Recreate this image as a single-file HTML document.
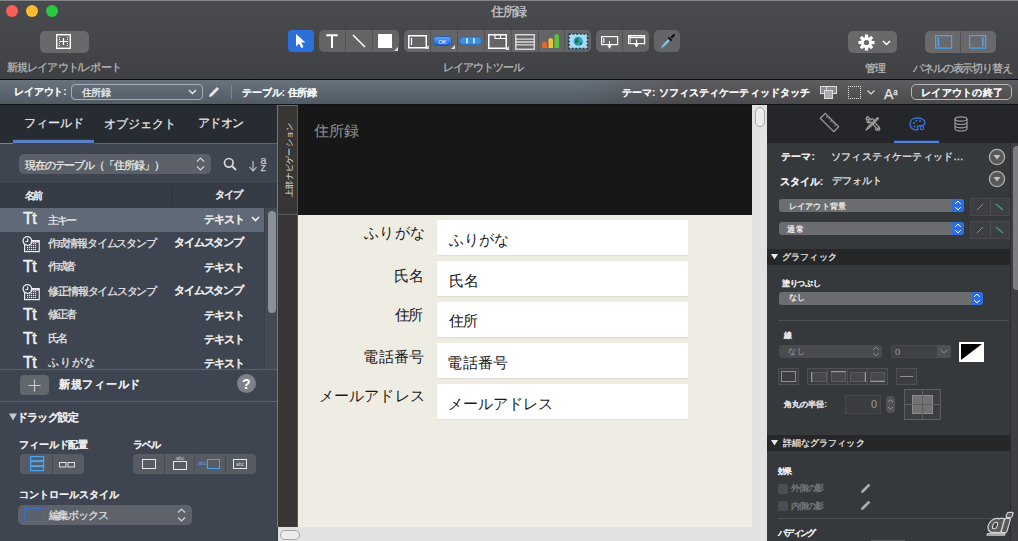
<!DOCTYPE html>
<html lang="ja">
<head>
<meta charset="utf-8">
<style>
*{margin:0;padding:0;box-sizing:border-box}
html,body{width:1018px;height:541px;overflow:hidden;background:#3a3a3c;font-family:"Liberation Sans",sans-serif;color:#fff;position:relative}
.a{position:absolute}
.t{position:absolute;white-space:nowrap;line-height:1;-webkit-text-stroke:0.25px currentColor}
svg{position:absolute;overflow:visible}
/* toolbar */
#top{left:0;top:0;width:1018px;height:79px;background:linear-gradient(#4a4b4e,#404144);border-top:1px solid #858587}
#tline{left:0;top:79px;width:1018px;height:1px;background:#0c0c0c}
#lbarg{left:0;top:80px;width:1018px;height:24px;background:linear-gradient(#5e5e60,#4a4a4c)}
#lbarb{left:0;top:80px;width:1018px;height:24px;background:linear-gradient(#68737e,#515b65);-webkit-mask-image:linear-gradient(90deg,#000 0,#000 570px,transparent 680px)}
#lline{left:0;top:104px;width:1018px;height:1px;background:#101214}
.light{border-radius:50%;width:12px;height:12px;top:5px}
.btn{background:#69696c;border-radius:5px}
.seg{background:#656568;border-radius:5px}
.div{width:1px;background:#545457;top:0;bottom:0}
.t[style*="color:#1a1a1a"]{-webkit-text-stroke:0}
.t[style*="font-weight:bold"],.lbt{-webkit-text-stroke:0.05px currentColor}
.lab{font-size:11px;color:#b9b9bb}
.lbt{font-size:11px;font-weight:bold;color:#f4f4f4}
/* main */
#left{left:0;top:105px;width:277px;height:436px;background:#3e4450}
#ruler{left:277px;top:105px;width:21px;height:422px;background:#383634;border-left:1px solid #7a7a7a;border-right:1px solid #5a5a5a;border-top:1px solid #6a6a6a}
#chead{left:298px;top:105px;width:454px;height:110px;background:#171717}
#cbody{left:298px;top:215px;width:454px;height:312px;background:#efede3}
#vscroll{left:752px;top:105px;width:15px;height:436px;background:#e2e2e2}
#hscroll{left:278px;top:527px;width:474px;height:14px;background:#e2e2e2}
#rtabs{left:767px;top:105px;width:251px;height:38px;background:#242629}
#right{left:767px;top:143px;width:251px;height:398px;background:#36393c}
</style>
</head>
<body>
<!-- ============ TOOLBAR ============ -->
<div id="top" class="a"></div>
<div class="a light" style="left:6px;background:#fc5f57"></div>
<div class="a light" style="left:26px;background:#fdbc2e"></div>
<div class="a light" style="left:46px;background:#2ac840"></div>
<div class="t" style="left:490.82px;top:5.71px;font-size:12.5px;color:#cacacc;letter-spacing:-1.31px">住所録</div>

<!-- new layout -->
<div class="a btn" style="left:40px;top:31px;width:49px;height:22px"></div>
<svg style="left:56px;top:34px" width="15" height="15" viewBox="0 0 15 15"><rect x="0.7" y="0.7" width="13.6" height="13.6" fill="none" stroke="#fff" stroke-width="1.4"/><g fill="#f0f0f0"><rect x="3" y="3" width="1" height="1"/><rect x="11" y="3" width="1" height="1"/><rect x="3" y="5" width="1" height="1"/><rect x="11" y="5" width="1" height="1"/><rect x="3" y="7" width="1" height="1"/><rect x="11" y="7" width="1" height="1"/><rect x="3" y="9" width="1" height="1"/><rect x="11" y="9" width="1" height="1"/><rect x="3" y="11" width="1" height="1"/><rect x="11" y="11" width="1" height="1"/></g><path d="M7.5 4v7M4 7.5h7" stroke="#fff" stroke-width="1.2"/></svg>
<div class="t lab" style="left:6.54px;top:61.92px;letter-spacing:-0.80px;font-size:10.7px">新規レイアウト/レポート</div>

<!-- layout tools -->
<div class="a" style="left:288px;top:30px;width:26px;height:22px;background:#2c6fda;border-radius:4px"></div>
<svg style="left:294px;top:33px" width="14" height="16" viewBox="0 0 14 16"><path d="M2 1L2 13.5L5 10.5L7.5 15L9.5 14L7.2 9.6L11.5 9.6Z" fill="#fff"/></svg>

<div class="a seg" style="left:319px;top:30px;width:80px;height:22px"></div>
<div class="a div" style="left:345px;top:30px;height:22px"></div>
<div class="a div" style="left:372px;top:30px;height:22px"></div>
<svg style="left:326px;top:34px" width="12" height="14"><path d="M0.3 0.3H11.7V2.3H7V14H5V2.3H0.3Z" fill="#fff"/></svg>
<svg style="left:352px;top:34px" width="14" height="14"><path d="M1 1L13 13" stroke="#fff" stroke-width="1.5"/></svg>
<div class="a" style="left:378px;top:34px;width:14px;height:14px;background:#fff"></div>
<svg style="left:394px;top:47px" width="4" height="4"><path d="M4 0V4H0Z" fill="#ddd"/></svg>

<div class="a seg" style="left:404px;top:30px;width:187px;height:22px"></div>
<div class="a div" style="left:430px;top:30px;height:22px"></div>
<div class="a div" style="left:457px;top:30px;height:22px"></div>
<div class="a div" style="left:484px;top:30px;height:22px"></div>
<div class="a div" style="left:511px;top:30px;height:22px"></div>
<div class="a div" style="left:538px;top:30px;height:22px"></div>
<div class="a div" style="left:564px;top:30px;height:22px"></div>
<!-- field tool -->
<svg style="left:408px;top:35px" width="20" height="14"><rect x="0.75" y="0.75" width="17.5" height="12" fill="none" stroke="#fff" stroke-width="1.5"/><path d="M3.5 3v7" stroke="#fff" stroke-width="1.3"/><path d="M21 10V14H17Z" fill="#ddd"/></svg>
<!-- button tool -->
<svg style="left:433px;top:35px" width="22" height="14"><defs><linearGradient id="gb" x1="0" y1="0" x2="0" y2="1"><stop offset="0" stop-color="#5fa8ff"/><stop offset="1" stop-color="#1f5fd0"/></linearGradient></defs><rect x="0.5" y="1.5" width="18" height="9" rx="3" fill="url(#gb)" stroke="#1a4fa8" stroke-width="0.8"/><text x="9.5" y="8.8" font-size="6" fill="#fff" text-anchor="middle" font-family="Liberation Sans">OK</text><path d="M22 10V14H18Z" fill="#ddd"/></svg>
<!-- button bar -->
<svg style="left:459px;top:36px" width="24" height="10"><rect x="0.5" y="1" width="22" height="7.5" rx="3.5" fill="#3a8fe0" stroke="#2a6cb8" stroke-width="0.8"/><path d="M8 2v5.5M15 2v5.5" stroke="#e8f4ff" stroke-width="1.4"/></svg>
<!-- tab control -->
<svg style="left:488px;top:34px" width="22" height="16"><rect x="0.75" y="0.75" width="17.5" height="13.5" fill="none" stroke="#fff" stroke-width="1.5"/><path d="M7 1v3.5h11M12.5 1v3.5" stroke="#fff" stroke-width="1.1" fill="none"/><path d="M21 12V16H17Z" fill="#ddd"/></svg>
<!-- portal -->
<svg style="left:515px;top:34px" width="20" height="16"><rect x="0.75" y="0.75" width="18.5" height="14.5" fill="none" stroke="#ddd" stroke-width="1.4"/><path d="M1 5.2h18M1 8h18M1 10.8h18" stroke="#ddd" stroke-width="1.3"/></svg>
<!-- chart -->
<svg style="left:541px;top:33px" width="20" height="17"><path d="M1 15V10.8Q1 8.8 3.5 8.8Q6 8.8 6 10.8V15Z" fill="#e2672e"/><path d="M7.5 15V7Q7.5 5 9.8 5Q12 5 12 7V15Z" fill="#eec13a"/><path d="M13.5 15V3Q13.5 1 15.8 1Q18 1 18 3V15Z" fill="#5ec23a"/></svg>
<!-- web viewer -->
<svg style="left:568px;top:33px" width="22" height="17"><rect x="1" y="1" width="18.5" height="14.5" fill="#a8dcf4" stroke="#223a5a" stroke-width="1.6" stroke-dasharray="2 1.6"/><circle cx="10.2" cy="8.3" r="4.6" fill="#2aa0c8"/><path d="M7 6.5q1.5-2 3.5-1.5q-1 2 .5 3.5q-2 1-2.5 3q-2-1.5-1.5-5z" fill="#1d7a4a"/><path d="M12 9.5q1.5-.5 2.5.8q-1 2-2.5 2.2z" fill="#1d7a4a"/></svg>

<div class="a seg" style="left:596px;top:30px;width:53px;height:22px"></div>
<div class="a div" style="left:622px;top:30px;height:22px"></div>
<svg style="left:600px;top:35px" width="20" height="15"><rect x="1.6" y="1.6" width="16" height="8" fill="none" stroke="#fff" stroke-width="1.2"/><path d="M3.8 3v5" stroke="#fff" stroke-width="1.1"/><path d="M9.5 6v6" stroke="#fff" stroke-width="1.2"/><path d="M7.3 10.5H11.7L9.5 13.8Z" fill="#fff"/></svg>
<svg style="left:627px;top:34px" width="20" height="15"><rect x="1.6" y="1.6" width="16" height="8" fill="none" stroke="#fff" stroke-width="1.2"/><path d="M1.6 3.4H17.6" stroke="#fff" stroke-width="1.6"/><path d="M3.2 2v7.5" stroke="#fff" stroke-width="0.8"/><path d="M9.5 5.5v6" stroke="#fff" stroke-width="1.2"/><path d="M7.3 10H11.7L9.5 13.4Z" fill="#fff"/></svg>

<div class="a seg" style="left:654px;top:30px;width:26px;height:22px"></div>
<svg style="left:659px;top:32px" width="18" height="18"><path d="M2 16.5Q3 13.5 5 11.5L10 6.5L11.5 8L6.5 13Q4.5 15 2 16.5Z" fill="#8fd0f0" stroke="#4f9cd0" stroke-width="0.6"/><path d="M9.3 5.5L12.5 8.7" stroke="#111" stroke-width="2"/><path d="M11.5 5L13.5 3Q14.5 1.5 15.8 2.2Q16.5 3.5 15 4.5L13 6.5Z" fill="#111"/></svg>
<div class="t lab" style="left:443.18px;top:62.02px;letter-spacing:-1.08px;font-size:10.7px">レイアウトツール</div>

<!-- manage -->
<div class="a btn" style="left:848px;top:31px;width:49px;height:22px"></div>
<svg style="left:858px;top:34px" width="17" height="17" viewBox="-8.5 -8.5 17 17"><g fill="#fff"><circle r="5.6"/><g id="tooth"><rect x="-1.6" y="-8" width="3.2" height="3.5"/></g><use href="#tooth" transform="rotate(45)"/><use href="#tooth" transform="rotate(90)"/><use href="#tooth" transform="rotate(135)"/><use href="#tooth" transform="rotate(180)"/><use href="#tooth" transform="rotate(225)"/><use href="#tooth" transform="rotate(270)"/><use href="#tooth" transform="rotate(315)"/></g><circle r="2.6" fill="#69696c"/></svg>
<svg style="left:882px;top:40px" width="9" height="6"><path d="M1 1L4.5 4.5L8 1" stroke="#fff" stroke-width="1.5" fill="none"/></svg>
<div class="t lab" style="left:865.00px;top:62.99px;letter-spacing:-0.65px;font-size:10.7px">管理</div>

<div class="a btn" style="left:925px;top:31px;width:71px;height:22px"></div>
<div class="a div" style="left:960px;top:31px;height:22px"></div>
<svg style="left:935px;top:35px" width="18" height="14"><rect x="0.6" y="0.6" width="16" height="12.5" fill="none" stroke="#4aa3f0" stroke-width="1.2"/><path d="M3.4 2.2v9.3" stroke="#4aa3f0" stroke-width="1.7"/></svg>
<svg style="left:969px;top:35px" width="18" height="14"><rect x="0.6" y="0.6" width="16" height="12.5" fill="none" stroke="#4aa3f0" stroke-width="1.2"/><path d="M13.8 2.2v9.3" stroke="#4aa3f0" stroke-width="1.7"/></svg>
<div class="t lab" style="left:912.72px;top:63.01px;letter-spacing:-1.05px;font-size:10.7px">パネルの表示切り替え</div>

<div id="tline" class="a"></div>
<!-- ============ LAYOUT BAR ============ -->
<div id="lbarg" class="a"></div>
<div id="lbarb" class="a"></div>
<div class="t lbt" style="left:13.82px;top:87.08px;letter-spacing:-0.09px;font-size:10.3px">レイアウト:</div>
<div class="a" style="left:71px;top:84px;width:132px;height:16px;border:1px solid #a5aeb8;border-radius:4px"></div>
<div class="t" style="left:81.62px;top:87.81px;font-size:10.3px;color:#f0f0f0;letter-spacing:-0.47px">住所録</div>
<svg style="left:188px;top:89px" width="9" height="6"><path d="M1 1L4.5 4.5L8 1" stroke="#eee" stroke-width="1.3" fill="none"/></svg>
<svg style="left:207px;top:85px" width="14" height="14"><path d="M2 12L2.8 9.2L10 2L12 4L4.8 11.2Z" fill="#e8e8e8"/></svg>
<div class="a" style="left:231px;top:85px;width:1px;height:14px;background:#7c8590"></div>
<div class="t lbt" style="left:241.90px;top:88.35px;letter-spacing:-0.11px;font-size:10.3px">テーブル: 住所録</div>

<div class="t lbt" style="left:621.64px;top:87.63px;letter-spacing:0.12px;font-size:10.3px">テーマ: ソフィスティケーティッドタッチ</div>
<svg style="left:820px;top:86px" width="18" height="13"><rect x="0.5" y="0.5" width="9" height="7" fill="#8a8a8a" stroke="#ddd"/><rect x="6.5" y="0.5" width="10" height="7" fill="#8a8a8a" stroke="#ddd"/><rect x="4.5" y="4.5" width="8" height="8" fill="#aaa" stroke="#ddd"/></svg>
<svg style="left:848px;top:86px" width="13" height="13"><g fill="#e0e0e0"><rect x="0" y="0" width="1" height="1"/><rect x="0" y="12" width="1" height="1"/><rect x="2" y="0" width="1" height="1"/><rect x="2" y="12" width="1" height="1"/><rect x="4" y="0" width="1" height="1"/><rect x="4" y="12" width="1" height="1"/><rect x="6" y="0" width="1" height="1"/><rect x="6" y="12" width="1" height="1"/><rect x="8" y="0" width="1" height="1"/><rect x="8" y="12" width="1" height="1"/><rect x="10" y="0" width="1" height="1"/><rect x="10" y="12" width="1" height="1"/><rect x="12" y="0" width="1" height="1"/><rect x="12" y="12" width="1" height="1"/><rect x="0" y="2" width="1" height="1"/><rect x="12" y="2" width="1" height="1"/><rect x="0" y="4" width="1" height="1"/><rect x="12" y="4" width="1" height="1"/><rect x="0" y="6" width="1" height="1"/><rect x="12" y="6" width="1" height="1"/><rect x="0" y="8" width="1" height="1"/><rect x="12" y="8" width="1" height="1"/><rect x="0" y="10" width="1" height="1"/><rect x="12" y="10" width="1" height="1"/></g></svg>
<svg style="left:867px;top:90px" width="8" height="5"><path d="M0.5 0.5L4 4L7.5 0.5" stroke="#ddd" stroke-width="1.1" fill="none"/></svg>
<div class="t" style="left:884px;top:87px;font-size:14px;color:#e8e8e8;font-family:'Liberation Sans'">A<span style="font-family:'Liberation Serif';font-size:10px;vertical-align:4px">a</span></div>
<div class="a" style="left:911px;top:84px;width:101px;height:16px;border:1px solid #b8b8b8;border-radius:5px"></div>
<div class="t lbt" style="left:921.10px;top:87.70px;letter-spacing:0.26px;font-size:10.3px">レイアウトの終了</div>
<div id="lline" class="a"></div>

<!-- ============ MAIN ============ -->
<div id="left" class="a"></div>
<!-- left tabs -->
<div class="a" style="left:0;top:105px;width:277px;height:38px;background:#272b32"></div>
<div class="a" style="left:13px;top:140px;width:81px;height:3px;background:#5a80c4;box-shadow:0 -1px 0 #1f3a70"></div>
<div class="a" style="left:0;top:143px;width:13px;height:1px;background:#7c8087"></div><div class="a" style="left:94px;top:143px;width:183px;height:1px;background:#60656c"></div>
<div class="t" style="left:23.90px;top:118.45px;font-size:11.5px;color:#e6e6e6;letter-spacing:-0.08px">フィールド</div>
<div class="t" style="left:104.36px;top:119.35px;font-size:11.5px;color:#e6e6e6;letter-spacing:-0.10px">オブジェクト</div>
<div class="t" style="left:197.72px;top:118.45px;font-size:11.5px;color:#e6e6e6;letter-spacing:-0.51px">アドオン</div>
<!-- table dropdown -->
<div class="a" style="left:19px;top:154px;width:192px;height:20px;background:#5c6169;border-radius:5px"></div>
<div class="t" style="left:24.62px;top:159.53px;font-size:10.5px;color:#ebebeb;letter-spacing:-1.03px">現在のテーブル（「住所録」）</div>
<svg style="left:196px;top:157px" width="9" height="14"><path d="M1 4.5L4.5 1L8 4.5M1 9.5L4.5 13L8 9.5" stroke="#cfd2d6" stroke-width="1.2" fill="none"/></svg>
<svg style="left:223px;top:157px" width="14" height="14"><circle cx="5.8" cy="5.8" r="4.3" fill="none" stroke="#d8d8d8" stroke-width="1.7"/><path d="M9 9L13 13" stroke="#d8d8d8" stroke-width="2"/></svg>
<svg style="left:248px;top:155px" width="20" height="18"><path d="M5 6V16M1.5 12L5 16L8.5 12" stroke="#c8ccd2" stroke-width="1.1" fill="none"/></svg>
<div class="t" style="left:260.5px;top:154.5px;font-size:10.5px;color:#c8ccd2">a</div>
<div class="t" style="left:260.5px;top:162px;font-size:10.5px;color:#c8ccd2">z</div>
<!-- header row -->
<div class="a" style="left:0;top:183px;width:277px;height:25px;background:#363c45"></div>
<div class="a" style="left:172px;top:185px;width:1px;height:21px;background:#2c3138"></div>
<div class="t" style="left:24.80px;top:190.52px;font-size:10px;font-weight:bold;color:#e4e4e4;letter-spacing:-2.01px">名前</div>
<div class="t" style="left:214.72px;top:189.65px;font-size:10px;font-weight:bold;color:#e4e4e4;letter-spacing:-0.62px">タイプ</div>
<!-- list -->
<div class="a" style="left:0;top:208px;width:266px;height:24px;background:#606977"></div>
<div class="a" style="left:264px;top:208px;width:13px;height:161px;background:#444a54;border-left:1px solid #3a3f47"></div>
<div class="a" style="left:268px;top:211px;width:8px;height:102px;background:#8b919a;border-radius:4px"></div>
<div class="t" style="left:23px;top:210.5px;font-size:16px;font-weight:normal;-webkit-text-stroke:0.5px #f0f0f0;color:#f0f0f0;letter-spacing:-0.6px">Tt</div>
<div class="t" style="left:47.54px;top:214.73px;font-size:10.5px;color:#e8e8e8;letter-spacing:-1.81px">主キー</div>
<div class="t" style="right:773.46px;top:213.81px;font-size:10.5px;font-weight:bold;color:#e8e8e8;letter-spacing:-0.95px">テキスト</div>
<svg style="left:22px;top:234.5px" width="19" height="19"><rect x="2.6" y="5.6" width="14.6" height="11" fill="none" stroke="#eee" stroke-width="1.2"/><path d="M2.6 6.8H17.2" stroke="#eee" stroke-width="1.4"/><g fill="#e8e8e8"><rect x="5" y="8" width="1.2" height="1.2"/><rect x="7" y="8" width="1.2" height="1.2"/><rect x="9" y="8" width="1.2" height="1.2"/><rect x="11" y="8" width="1.2" height="1.2"/><rect x="13" y="8" width="1.2" height="1.2"/><rect x="5" y="10" width="1.2" height="1.2"/><rect x="7" y="10" width="1.2" height="1.2"/><rect x="9" y="10" width="1.2" height="1.2"/><rect x="11" y="10" width="1.2" height="1.2"/><rect x="13" y="10" width="1.2" height="1.2"/><rect x="5" y="12" width="1.2" height="1.2"/><rect x="7" y="12" width="1.2" height="1.2"/><rect x="9" y="12" width="1.2" height="1.2"/><rect x="11" y="12" width="1.2" height="1.2"/><rect x="13" y="12" width="1.2" height="1.2"/><rect x="5" y="14" width="1.2" height="1.2"/><rect x="7" y="14" width="1.2" height="1.2"/><rect x="9" y="14" width="1.2" height="1.2"/><rect x="11" y="14" width="1.2" height="1.2"/><rect x="13" y="14" width="1.2" height="1.2"/></g><circle cx="5.4" cy="6" r="4.3" fill="#3e4450" stroke="#eee" stroke-width="1.3"/><path d="M5.7 3.6V6.5H3.4" stroke="#eee" stroke-width="1.1" fill="none"/></svg>
<div class="t" style="left:47.54px;top:237.81px;font-size:10.5px;color:#e8e8e8;letter-spacing:-1.15px">作成情報タイムスタンプ</div>
<div class="t" style="right:775.44px;top:237.38px;font-size:10.5px;font-weight:bold;color:#e8e8e8;letter-spacing:-1.26px">タイムスタンプ</div>
<div class="t" style="left:23px;top:258.5px;font-size:16px;font-weight:normal;-webkit-text-stroke:0.5px #f0f0f0;color:#f0f0f0;letter-spacing:-0.6px">Tt</div>
<div class="t" style="left:47.54px;top:261.20px;font-size:10.5px;color:#e8e8e8;letter-spacing:-2.02px">作成者</div>
<div class="t" style="right:773.46px;top:261.87px;font-size:10.5px;font-weight:bold;color:#e8e8e8;letter-spacing:-0.95px">テキスト</div>
<svg style="left:22px;top:282.5px" width="19" height="19"><rect x="2.6" y="5.6" width="14.6" height="11" fill="none" stroke="#eee" stroke-width="1.2"/><path d="M2.6 6.8H17.2" stroke="#eee" stroke-width="1.4"/><g fill="#e8e8e8"><rect x="5" y="8" width="1.2" height="1.2"/><rect x="7" y="8" width="1.2" height="1.2"/><rect x="9" y="8" width="1.2" height="1.2"/><rect x="11" y="8" width="1.2" height="1.2"/><rect x="13" y="8" width="1.2" height="1.2"/><rect x="5" y="10" width="1.2" height="1.2"/><rect x="7" y="10" width="1.2" height="1.2"/><rect x="9" y="10" width="1.2" height="1.2"/><rect x="11" y="10" width="1.2" height="1.2"/><rect x="13" y="10" width="1.2" height="1.2"/><rect x="5" y="12" width="1.2" height="1.2"/><rect x="7" y="12" width="1.2" height="1.2"/><rect x="9" y="12" width="1.2" height="1.2"/><rect x="11" y="12" width="1.2" height="1.2"/><rect x="13" y="12" width="1.2" height="1.2"/><rect x="5" y="14" width="1.2" height="1.2"/><rect x="7" y="14" width="1.2" height="1.2"/><rect x="9" y="14" width="1.2" height="1.2"/><rect x="11" y="14" width="1.2" height="1.2"/><rect x="13" y="14" width="1.2" height="1.2"/></g><circle cx="5.4" cy="6" r="4.3" fill="#3e4450" stroke="#eee" stroke-width="1.3"/><path d="M5.7 3.6V6.5H3.4" stroke="#eee" stroke-width="1.1" fill="none"/></svg>
<div class="t" style="left:48.44px;top:285.69px;font-size:10.5px;color:#e8e8e8;letter-spacing:-1.23px">修正情報タイムスタンプ</div>
<div class="t" style="right:775.44px;top:285.25px;font-size:10.5px;font-weight:bold;color:#e8e8e8;letter-spacing:-1.26px">タイムスタンプ</div>
<div class="t" style="left:23px;top:306.5px;font-size:16px;font-weight:normal;-webkit-text-stroke:0.5px #f0f0f0;color:#f0f0f0;letter-spacing:-0.6px">Tt</div>
<div class="t" style="left:48.44px;top:309.20px;font-size:10.5px;color:#e8e8e8;letter-spacing:-2.42px">修正者</div>
<div class="t" style="right:773.46px;top:309.87px;font-size:10.5px;font-weight:bold;color:#e8e8e8;letter-spacing:-0.95px">テキスト</div>
<div class="t" style="left:23px;top:330.5px;font-size:16px;font-weight:normal;-webkit-text-stroke:0.5px #f0f0f0;color:#f0f0f0;letter-spacing:-0.6px">Tt</div>
<div class="t" style="left:47.54px;top:332.76px;font-size:10.5px;color:#e8e8e8;letter-spacing:-1.87px">氏名</div>
<div class="t" style="right:773.46px;top:333.87px;font-size:10.5px;font-weight:bold;color:#e8e8e8;letter-spacing:-0.95px">テキスト</div>
<div class="t" style="left:23px;top:354.5px;font-size:16px;font-weight:normal;-webkit-text-stroke:0.5px #f0f0f0;color:#f0f0f0;letter-spacing:-0.6px">Tt</div>
<div class="t" style="left:48.44px;top:357.26px;font-size:10.5px;color:#e8e8e8;letter-spacing:0.96px">ふりがな</div>
<div class="t" style="right:773.46px;top:358.30px;font-size:10.5px;font-weight:bold;color:#e8e8e8;letter-spacing:-0.95px">テキスト</div>
<svg style="left:251px;top:216px" width="9" height="6"><path d="M1 1L4.5 4.5L8 1" stroke="#f0f0f0" stroke-width="1.6" fill="none"/></svg>
<div class="a" style="left:0;top:369px;width:277px;height:1px;background:#5a5f67"></div>
<div class="a" style="left:20px;top:375px;width:29px;height:20px;background:#62676e;border-radius:4px"></div>
<svg style="left:27px;top:378px" width="15" height="15"><path d="M7.5 1.5V13.5M1.5 7.5H13.5" stroke="#c9ccd0" stroke-width="1.1"/></svg>
<div class="t" style="left:58.90px;top:379.17px;font-size:11px;font-weight:bold;color:#ededed;letter-spacing:0.73px">新規フィールド</div>
<div class="a" style="left:237px;top:374px;width:19px;height:19px;border-radius:50%;background:#7d828a"></div>
<div class="t" style="left:242px;top:377px;font-size:14px;font-weight:bold;color:#fff">?</div>
<div class="a" style="left:0;top:401px;width:277px;height:1px;background:#5a5f67"></div>
<svg style="left:9px;top:413px" width="8" height="8"><path d="M0 0.5H8L4 7.5Z" fill="#c4c8ce"/></svg>
<div class="t" style="left:16.66px;top:412.36px;font-size:10.5px;font-weight:bold;color:#ebebeb;letter-spacing:-0.64px">ドラッグ設定</div>
<div class="t" style="left:19.46px;top:439.81px;font-size:10px;font-weight:bold;color:#ebebeb;letter-spacing:-0.21px">フィールド配置</div>
<div class="t" style="left:132.82px;top:439.81px;font-size:10px;font-weight:bold;color:#ebebeb;letter-spacing:-1.08px">ラベル</div>
<div class="a" style="left:20px;top:454px;width:64px;height:20px;background:#575c64;border-radius:4px"></div>
<div class="a" style="left:52px;top:454px;width:1px;height:20px;background:#484d55"></div>
<svg style="left:30px;top:456px" width="15" height="16"><rect x="0.6" y="0.6" width="13" height="4" fill="none" stroke="#4aa3f0" stroke-width="1.2"/><rect x="0.6" y="5.6" width="13" height="4" fill="none" stroke="#4aa3f0" stroke-width="1.2"/><rect x="0.6" y="10.6" width="13" height="4" fill="none" stroke="#4aa3f0" stroke-width="1.2"/></svg>
<svg style="left:59px;top:462px" width="17" height="6"><rect x="0.5" y="0.5" width="6.5" height="4.5" fill="none" stroke="#e0e0e0"/><rect x="9" y="0.5" width="6.5" height="4.5" fill="none" stroke="#e0e0e0"/></svg>
<div class="a" style="left:133px;top:454px;width:123px;height:20px;background:#575c64;border-radius:4px"></div>
<div class="a" style="left:164px;top:454px;width:1px;height:20px;background:#484d55"></div>
<div class="a" style="left:194px;top:454px;width:1px;height:20px;background:#484d55"></div>
<div class="a" style="left:225px;top:454px;width:1px;height:20px;background:#484d55"></div>
<svg style="left:142px;top:459px" width="14" height="10"><rect x="0.5" y="0.5" width="13" height="9" fill="none" stroke="#e8e8e8"/></svg>
<svg style="left:172px;top:455px" width="16" height="16"><text x="8" y="5" font-size="5" fill="#cfcfcf" text-anchor="middle" font-family="Liberation Sans">abc</text><rect x="1.5" y="6.5" width="13" height="8" fill="none" stroke="#e8e8e8"/></svg>
<svg style="left:199px;top:459px" width="22" height="10"><text x="3.5" y="6" font-size="5" fill="#4aa3f0" text-anchor="middle" font-family="Liberation Sans">abc</text><rect x="8.5" y="0.5" width="12" height="9" fill="none" stroke="#4aa3f0"/></svg>
<svg style="left:233px;top:459px" width="14" height="10"><rect x="0.5" y="0.5" width="13" height="9" fill="none" stroke="#e8e8e8"/><text x="7" y="6.8" font-size="5" fill="#d8d8d8" text-anchor="middle" font-family="Liberation Sans">abc</text></svg>
<div class="t" style="left:19.46px;top:489.73px;font-size:10px;font-weight:bold;color:#ebebeb;letter-spacing:-0.04px">コントロールスタイル</div>
<div class="a" style="left:18px;top:505px;width:174px;height:20px;background:#5e636b;border-radius:5px"></div>
<div class="a" style="left:24px;top:508px;width:20px;height:14px;border:1.5px solid #3f6ec8;background:#5a6270"></div>
<div class="t" style="left:48.54px;top:509.63px;font-size:11px;color:#e0e0e0;letter-spacing:-1.05px">編集ボックス</div>
<svg style="left:177px;top:508px" width="9" height="14"><path d="M1 4.5L4.5 1L8 4.5M1 9.5L4.5 13L8 9.5" stroke="#cfd2d6" stroke-width="1.2" fill="none"/></svg>
<div id="ruler" class="a"></div>
<div id="chead" class="a"></div>
<div id="cbody" class="a"></div>
<div class="a" style="left:278px;top:214px;width:20px;height:1px;background:#5a5a5a"></div>
<div class="t" style="left:285px;top:197px;font-size:8.3px;color:#d8d8d8;letter-spacing:0.3px;-webkit-text-stroke:0.1px currentColor;transform:rotate(-90deg);transform-origin:0 0">上部ナビゲーション</div>
<div class="t" style="left:313.82px;top:122.83px;font-size:15px;color:#8c8c8c;letter-spacing:-0.01px;-webkit-text-stroke:0.1px currentColor">住所録</div>
<!-- fields -->
<div class="a" style="left:437px;top:220px;width:251px;height:35px;background:#fff;box-shadow:0 1px 1px #e2e0d6"></div>
<div class="t" style="right:593.10px;top:225.56px;font-size:14.5px;color:#1a1a1a;letter-spacing:0.15px">ふりがな</div>
<div class="t" style="left:449.18px;top:232.86px;font-size:14.5px;color:#1a1a1a;letter-spacing:0.01px">ふりがな</div>
<div class="a" style="left:437px;top:261px;width:251px;height:35px;background:#fff;box-shadow:0 1px 1px #e2e0d6"></div>
<div class="t" style="right:593.8px;top:267.6px;font-size:15px;color:#1a1a1a;letter-spacing:0px">氏名</div>
<div class="t" style="left:448.6px;top:273.8px;font-size:14.5px;color:#1a1a1a;letter-spacing:0.3px">氏名</div>
<div class="a" style="left:437px;top:302px;width:251px;height:35px;background:#fff;box-shadow:0 1px 1px #e2e0d6"></div>
<div class="t" style="right:595.80px;top:308.48px;font-size:14.5px;color:#1a1a1a;letter-spacing:-1.23px">住所</div>
<div class="t" style="left:449.18px;top:314.47px;font-size:14.5px;color:#1a1a1a;letter-spacing:-1.05px">住所</div>
<div class="a" style="left:437px;top:343px;width:251px;height:35px;background:#fff;box-shadow:0 1px 1px #e2e0d6"></div>
<div class="t" style="right:594.00px;top:349.55px;font-size:14.5px;color:#1a1a1a;letter-spacing:0.14px">電話番号</div>
<div class="t" style="left:447.38px;top:355.74px;font-size:14.5px;color:#1a1a1a;letter-spacing:0.13px">電話番号</div>
<div class="a" style="left:437px;top:384px;width:251px;height:35px;background:#fff;box-shadow:0 1px 1px #e2e0d6"></div>
<div class="t" style="right:593.10px;top:389.20px;font-size:14.5px;color:#1a1a1a;letter-spacing:0.14px">メールアドレス</div>
<div class="t" style="left:448.10px;top:396.56px;font-size:14.5px;color:#1a1a1a;letter-spacing:-0.05px">メールアドレス</div>
<div id="vscroll" class="a"></div>
<div class="a" style="left:755px;top:107px;width:10px;height:20px;border:1px solid #a8a8a8;border-radius:5px;background:#ececec"></div>

<div id="hscroll" class="a"></div>
<div class="a" style="left:280px;top:530px;width:20px;height:10px;border:1px solid #a8a8a8;border-radius:5px;background:#ececec"></div>
<div id="rtabs" class="a"></div>
<div id="right" class="a"></div>
<!-- right tabs icons -->
<svg style="left:821px;top:114px" width="17" height="17"><g transform="rotate(-45 8.5 8.5)"><rect x="5" y="-1" width="7" height="19" fill="none" stroke="#9c9c9c" stroke-width="1.3"/><path d="M12 2.5h-2.5M12 5.5h-1.8M12 8.5h-2.5M12 11.5h-1.8M12 14.5h-2.5" stroke="#9c9c9c" stroke-width="1"/></g></svg>
<svg style="left:864px;top:115px" width="17" height="17"><g stroke="#9c9c9c" stroke-width="1.3" fill="none" stroke-linejoin="round"><path d="M13.5 2.5L4 12L2 15L5 13L14.5 3.5Z"/><path d="M3.5 1.5Q1.5 3 2.5 5L4.5 4.5L5 6.5L3 7Q5 8.5 6.5 7L12 12.5Q11 14.5 13 15.5L13.5 13.5L15.5 13L15 15.5Q16.5 14 15 12L9.5 6.5Q10.5 4.5 8 3.5L7 5L5.5 3.5Z"/></g></svg>
<svg style="left:909px;top:117px" width="17" height="14"><path d="M8 1C3.5 1 1 3.8 1 7C1 10.5 4 13 7.5 13C9.2 13 9.3 11.6 8.6 10.8C7.9 9.9 8.6 8.9 9.7 8.9H11.5C14 8.9 15.8 7.6 15.8 5.5C15.8 2.8 12.5 1 8 1Z" fill="none" stroke="#3a72dc" stroke-width="1.4"/><circle cx="5" cy="6" r="1" fill="#3a72dc"/><circle cx="7.5" cy="3.8" r="1" fill="#3a72dc"/><circle cx="11" cy="4" r="1" fill="#3a72dc"/><circle cx="5.5" cy="9.5" r="1" fill="#3a72dc"/><circle cx="13" cy="11" r="1.7" fill="none" stroke="#3a72dc" stroke-width="1.1"/></svg>
<svg style="left:954px;top:116px" width="14" height="16"><g fill="none" stroke="#9c9c9c" stroke-width="1.2"><ellipse cx="7" cy="3" rx="6" ry="2.2"/><path d="M1 3V12.8C1 14 3.7 15 7 15S13 14 13 12.8V3M1 6.3C1 7.5 3.7 8.5 7 8.5S13 7.5 13 6.3M1 9.6C1 10.8 3.7 11.8 7 11.8S13 10.8 13 9.6"/></g></svg>
<div class="a" style="left:894px;top:141px;width:45px;height:2px;background:#5a80c4;box-shadow:0 -1px 0 #1f3a70"></div>
<!-- right scrollbar -->
<div class="a" style="left:1010px;top:143px;width:8px;height:398px;background:#3d3f43;border-left:1px solid #2a2c2f"></div>
<div class="a" style="left:1013px;top:146px;width:8px;height:144px;background:#7b7d80;border-radius:4px"></div>
<!-- theme / style -->
<div class="t" style="left:781.18px;top:152.08px;font-size:10.3px;font-weight:bold;color:#ececec;letter-spacing:0.15px">テーマ:</div>
<div class="t" style="left:831.00px;top:152.08px;font-size:10.3px;color:#e6e6e6;letter-spacing:0.18px">ソフィスティケーティッド…</div>
<div class="t" style="left:779.64px;top:176.69px;font-size:10.3px;font-weight:bold;color:#ececec;letter-spacing:0.05px">スタイル:</div>
<div class="t" style="left:831.90px;top:176.09px;font-size:10.3px;color:#e6e6e6;letter-spacing:0.12px">デフォルト</div>
<svg style="left:988px;top:148px" width="18" height="18"><circle cx="9" cy="9" r="7.6" fill="#575859" stroke="#b0b0b0" stroke-width="1.3"/><path d="M5.5 7H12.5L9 11.5Z" fill="#c4c4c4"/></svg>
<svg style="left:988px;top:170px" width="18" height="18"><circle cx="9" cy="9" r="7.6" fill="#575859" stroke="#b0b0b0" stroke-width="1.3"/><path d="M5.5 7H12.5L9 11.5Z" fill="#c4c4c4"/></svg>
<!-- popups -->
<div class="a" style="left:779px;top:199px;width:185px;height:13px;background:#6c6d70;border-radius:3px;overflow:hidden"><div class="a" style="right:0;top:0;width:12px;height:13px;background:#2f6ee0"></div></div>
<div class="t" style="left:788.64px;top:202.53px;font-size:8.2px;color:#f0f0f0;letter-spacing:0.27px">レイアウト背景</div>
<svg style="left:954px;top:200px" width="8" height="11"><path d="M1.2 3.8L4 1.2L6.8 3.8M1.2 7.2L4 9.8L6.8 7.2" stroke="#fff" stroke-width="1" fill="none"/></svg>
<div class="a" style="left:779px;top:222px;width:185px;height:13px;background:#6c6d70;border-radius:3px;overflow:hidden"><div class="a" style="right:0;top:0;width:12px;height:13px;background:#2f6ee0"></div></div>
<div class="t" style="left:787.38px;top:226.00px;font-size:8.2px;color:#f0f0f0;letter-spacing:0.82px">通常</div>
<svg style="left:954px;top:223px" width="8" height="11"><path d="M1.2 3.8L4 1.2L6.8 3.8M1.2 7.2L4 9.8L6.8 7.2" stroke="#fff" stroke-width="1" fill="none"/></svg>
<div class="a" style="left:970px;top:198px;width:40px;height:18px;background:#3c3e41;border:1px solid #47494c"></div>
<div class="a" style="left:990px;top:198px;width:1px;height:18px;background:#4b4d50"></div>
<svg style="left:975px;top:202px" width="10" height="10"><path d="M2 8L8 2" stroke="#8a8a8a" stroke-width="1"/></svg>
<svg style="left:994px;top:202px" width="12" height="10"><path d="M2 2L9 8" stroke="#3a9a8a" stroke-width="1.5"/></svg>
<div class="a" style="left:970px;top:221px;width:40px;height:18px;background:#3c3e41;border:1px solid #47494c"></div>
<div class="a" style="left:990px;top:221px;width:1px;height:18px;background:#4b4d50"></div>
<svg style="left:975px;top:225px" width="10" height="10"><path d="M2 8L8 2" stroke="#8a8a8a" stroke-width="1"/></svg>
<svg style="left:994px;top:225px" width="12" height="10"><path d="M2 2L9 8" stroke="#3a9a8a" stroke-width="1.5"/></svg>
<!-- graphics section -->
<div class="a" style="left:767px;top:249px;width:243px;height:16px;background:#262729"></div>
<svg style="left:771px;top:254px" width="7" height="6"><path d="M0 0H7L3.5 5.5Z" fill="#e8e8e8"/></svg>
<div class="t" style="left:782.18px;top:253.08px;font-size:9.3px;color:#e8e8e8;letter-spacing:0.09px">グラフィック</div>
<div class="t" style="left:781.90px;top:279.53px;font-size:8.2px;font-weight:bold;color:#ececec;letter-spacing:-0.29px">塗りつぶし</div>
<div class="a" style="left:779px;top:292px;width:204px;height:13px;background:#6c6d70;border-radius:3px;overflow:hidden"><div class="a" style="right:0;top:0;width:12px;height:13px;background:#2f6ee0"></div></div>
<div class="t" style="left:788.64px;top:293.96px;font-size:8.2px;color:#f0f0f0;letter-spacing:0.04px">なし</div>
<svg style="left:973px;top:293px" width="8" height="11"><path d="M1.2 3.8L4 1.2L6.8 3.8M1.2 7.2L4 9.8L6.8 7.2" stroke="#fff" stroke-width="1" fill="none"/></svg>
<div class="a" style="left:778px;top:320px;width:231px;height:1px;background:#4c4e52"></div>
<div class="t" style="left:783.70px;top:331.98px;font-size:8.2px;font-weight:bold;color:#ececec;letter-spacing:-10.72px">線</div>
<div class="a" style="left:779px;top:345px;width:103px;height:13px;background:#4a4b4e;border-radius:3px"></div>
<div class="t" style="left:788.28px;top:348.08px;font-size:8.2px;color:#8a8a8a;letter-spacing:0.27px">なし</div>
<svg style="left:872px;top:346px" width="8" height="11"><path d="M1.2 3.8L4 1.2L6.8 3.8M1.2 7.2L4 9.8L6.8 7.2" stroke="#8a8a8a" stroke-width="1" fill="none"/></svg>
<div class="a" style="left:891px;top:345px;width:60px;height:13px;background:#404144;border:1px solid #47494c;border-radius:2px"></div>
<div class="a" style="left:937px;top:345px;width:14px;height:13px;background:#4f5053;border-radius:0 3px 3px 0"></div>
<div class="t" style="left:895px;top:347px;font-size:9.5px;color:#8a8a8a">0</div>
<svg style="left:940px;top:349px" width="8" height="5"><path d="M0.5 0.5L4 4L7.5 0.5" stroke="#8a8a8a" stroke-width="1" fill="none"/></svg>
<svg style="left:959px;top:342px" width="25" height="20"><rect x="0.75" y="0.75" width="23.5" height="18.5" fill="#fff" stroke="#fff" stroke-width="1.5"/><path d="M2 2H23L2 18Z" fill="#000"/></svg>
<!-- border buttons -->
<div class="a" style="left:778px;top:368px;width:21px;height:17px;background:#3c3e41;border:1px solid #4e5053"></div>
<svg style="left:781px;top:371px" width="15" height="11"><rect x="0.5" y="0.5" width="14" height="10" fill="none" stroke="#8e8e8e"/></svg>
<div class="a" style="left:807px;top:368px;width:81px;height:17px;background:#3c3e41;border:1px solid #4e5053"></div>
<div class="a" style="left:827px;top:368px;width:1px;height:17px;background:#4e5053"></div>
<div class="a" style="left:847px;top:368px;width:1px;height:17px;background:#4e5053"></div>
<div class="a" style="left:867px;top:368px;width:1px;height:17px;background:#4e5053"></div>
<svg style="left:809px;top:370px" width="78" height="13"><g stroke="#9a9a9a" stroke-width="1" fill="none"><path d="M2.5 2v10"/><path d="M22 1.5h15"/><path d="M56.5 2v10"/><path d="M61 11.5h15"/></g><g stroke="#5a5c60" stroke-width="1" fill="#46484b"><rect x="3.5" y="2.5" width="14" height="9"/><rect x="22.5" y="2.5" width="14" height="9"/><rect x="41.5" y="2.5" width="14" height="9"/><rect x="61.5" y="2.5" width="14" height="8"/></g></svg>
<div class="a" style="left:896px;top:368px;width:21px;height:17px;background:#3c3e41;border:1px solid #4e5053"></div>
<svg style="left:899px;top:371px" width="15" height="11"><path d="M1 5.5H14" stroke="#8e8e8e"/></svg>
<div class="t" style="left:784.08px;top:400.58px;font-size:8.2px;font-weight:bold;color:#e0e0e0;letter-spacing:0.05px">角丸の半径:</div>
<div class="a" style="left:845px;top:395px;width:36px;height:19px;background:#3b3d40;border:1px solid #46484b"></div>
<div class="t" style="left:871px;top:399px;font-size:11px;color:#8a8a8a">0</div>
<div class="a" style="left:886px;top:396px;width:9px;height:17px;background:#505256;border-radius:4px"></div>
<svg style="left:886px;top:398px" width="9" height="13"><path d="M2 4L4.5 1.8L7 4M2 9L4.5 11.2L7 9" stroke="#999" stroke-width="0.9" fill="none"/></svg>
<div class="a" style="left:904px;top:389px;width:37px;height:31px;background:#3c3e41;border:1px solid #5c5e61"></div>
<div class="a" style="left:912px;top:395px;width:21px;height:19px;background:#707274;border:1px solid #8a8c8e"></div>
<div class="a" style="left:922px;top:389px;width:1px;height:31px;background:#5c5e61"></div>
<div class="a" style="left:904px;top:404px;width:37px;height:1px;background:#5c5e61"></div>
<!-- advanced graphics -->
<div class="a" style="left:767px;top:435px;width:243px;height:16px;background:#262729"></div>
<svg style="left:771px;top:440px" width="7" height="6"><path d="M0 0H7L3.5 5.5Z" fill="#e8e8e8"/></svg>
<div class="t" style="left:782.90px;top:439.38px;font-size:9.3px;color:#e8e8e8;letter-spacing:0.08px">詳細なグラフィック</div>
<div class="t" style="left:778.08px;top:468.38px;font-size:8.2px;font-weight:bold;color:#ececec;letter-spacing:-2.16px">効果</div>
<div class="a" style="left:778px;top:484px;width:10px;height:10px;background:#4c4d50;border-radius:2px"></div>
<div class="t" style="left:791.18px;top:484.36px;font-size:8.5px;color:#7e7e7e;letter-spacing:-1.10px">外側の影</div>
<svg style="left:860px;top:482px" width="12" height="12"><path d="M1 11L1.6 8.6L8.5 1.7L10.3 3.5L3.4 10.4Z" fill="#b0b0b0"/></svg>
<div class="a" style="left:778px;top:501px;width:10px;height:10px;background:#4c4d50;border-radius:2px"></div>
<div class="t" style="left:791.18px;top:501.70px;font-size:8.5px;color:#7e7e7e;letter-spacing:-1.07px">内側の影</div>
<svg style="left:860px;top:499px" width="12" height="12"><path d="M1 11L1.6 8.6L8.5 1.7L10.3 3.5L3.4 10.4Z" fill="#b0b0b0"/></svg>
<div class="a" style="left:778px;top:518px;width:231px;height:1px;background:#4c4e52"></div>
<div class="t" style="left:778.08px;top:529.00px;font-size:8.5px;font-weight:bold;color:#ececec;letter-spacing:-1.72px">パディング</div>
<div class="a" style="left:871px;top:540px;width:34px;height:1px;background:#5a5c60"></div>
<!-- watermark -->
<svg style="left:984px;top:509px" width="34" height="30"><g transform="translate(7,1) skewX(-16)"><g fill="#d4d4d4" stroke="#d4d4d4" stroke-width="2.4"><ellipse cx="8.5" cy="15.5" rx="6.3" ry="6.5"/><rect x="11" y="9" width="4.5" height="13" rx="1"/><rect x="17" y="9" width="4.5" height="13" rx="1"/><rect x="17.5" y="3" width="5" height="4" rx="1.2"/></g><g fill="#58595b"><ellipse cx="8.5" cy="15.5" rx="6.3" ry="6.5"/><rect x="11" y="9" width="4.5" height="13" rx="1"/><rect x="17" y="9" width="4.5" height="13" rx="1"/><rect x="17.5" y="3" width="5" height="4" rx="1.2"/></g><ellipse cx="8.5" cy="15.5" rx="2.3" ry="3.3" fill="#3a3c3f" stroke="#d4d4d4" stroke-width="1.1"/><rect x="3" y="23.5" width="18" height="1.8" fill="#9a9a9a" stroke="#d4d4d4" stroke-width="0.8"/></g></svg>
</body>
</html>
